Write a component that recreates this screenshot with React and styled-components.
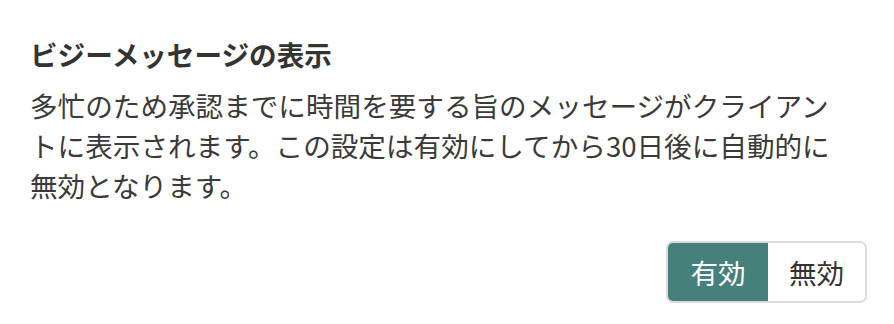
import React, { useState } from "react";
import styled, { createGlobalStyle } from "styled-components";

const GlobalStyle = createGlobalStyle`
  html, body {
    margin: 0;
    padding: 0;
    background: #fff;
  }
  body {
    font-family: "Noto Sans CJK JP", "Noto Sans", sans-serif;
    color: #333;
  }
`;

const Panel = styled.section`
  width: 894px;
  box-sizing: border-box;
  padding: 34px 27px 0 30px;
`;

const Title = styled.h2`
  margin: 0;
  font-size: 27.6px;
  line-height: 40px;
  font-weight: 700;
  color: #333;
`;

const Description = styled.p`
  max-width: 815px;
  margin: 11px 0 0;
  font-size: 27.6px;
  line-height: 40px;
  font-weight: 400;
  color: #3a3a3a;
`;

const Actions = styled.div`
  display: flex;
  justify-content: flex-end;
  margin-top: 36px;
`;

const Toggle = styled.div`
  display: flex;
  border: 2px solid #dcdcdc;
  border-radius: 7px;
  overflow: hidden;
`;

const ToggleButton = styled.button`
  width: ${(p) => (p.$active ? "100px" : "97px")};
  height: 58px;
  border: none;
  margin: 0;
  padding: 0;
  font-family: inherit;
  font-size: 27.6px;
  background: ${(p) => (p.$active ? "#45817a" : "#fff")};
  color: ${(p) => (p.$active ? "#fff" : "#333")};
  cursor: pointer;
`;

export default function App() {
  const [enabled, setEnabled] = useState(true);
  return (
    <>
      <GlobalStyle />
      <Panel>
        <Title>ビジーメッセージの表示</Title>
        <Description>
          多忙のため承認までに時間を要する旨のメッセージがクライアントに表示されます。この設定は有効にしてから30日後に自動的に無効となります。
        </Description>
        <Actions>
          <Toggle>
            <ToggleButton $active={enabled} onClick={() => setEnabled(true)}>
              有効
            </ToggleButton>
            <ToggleButton $active={!enabled} onClick={() => setEnabled(false)}>
              無効
            </ToggleButton>
          </Toggle>
        </Actions>
      </Panel>
    </>
  );
}
